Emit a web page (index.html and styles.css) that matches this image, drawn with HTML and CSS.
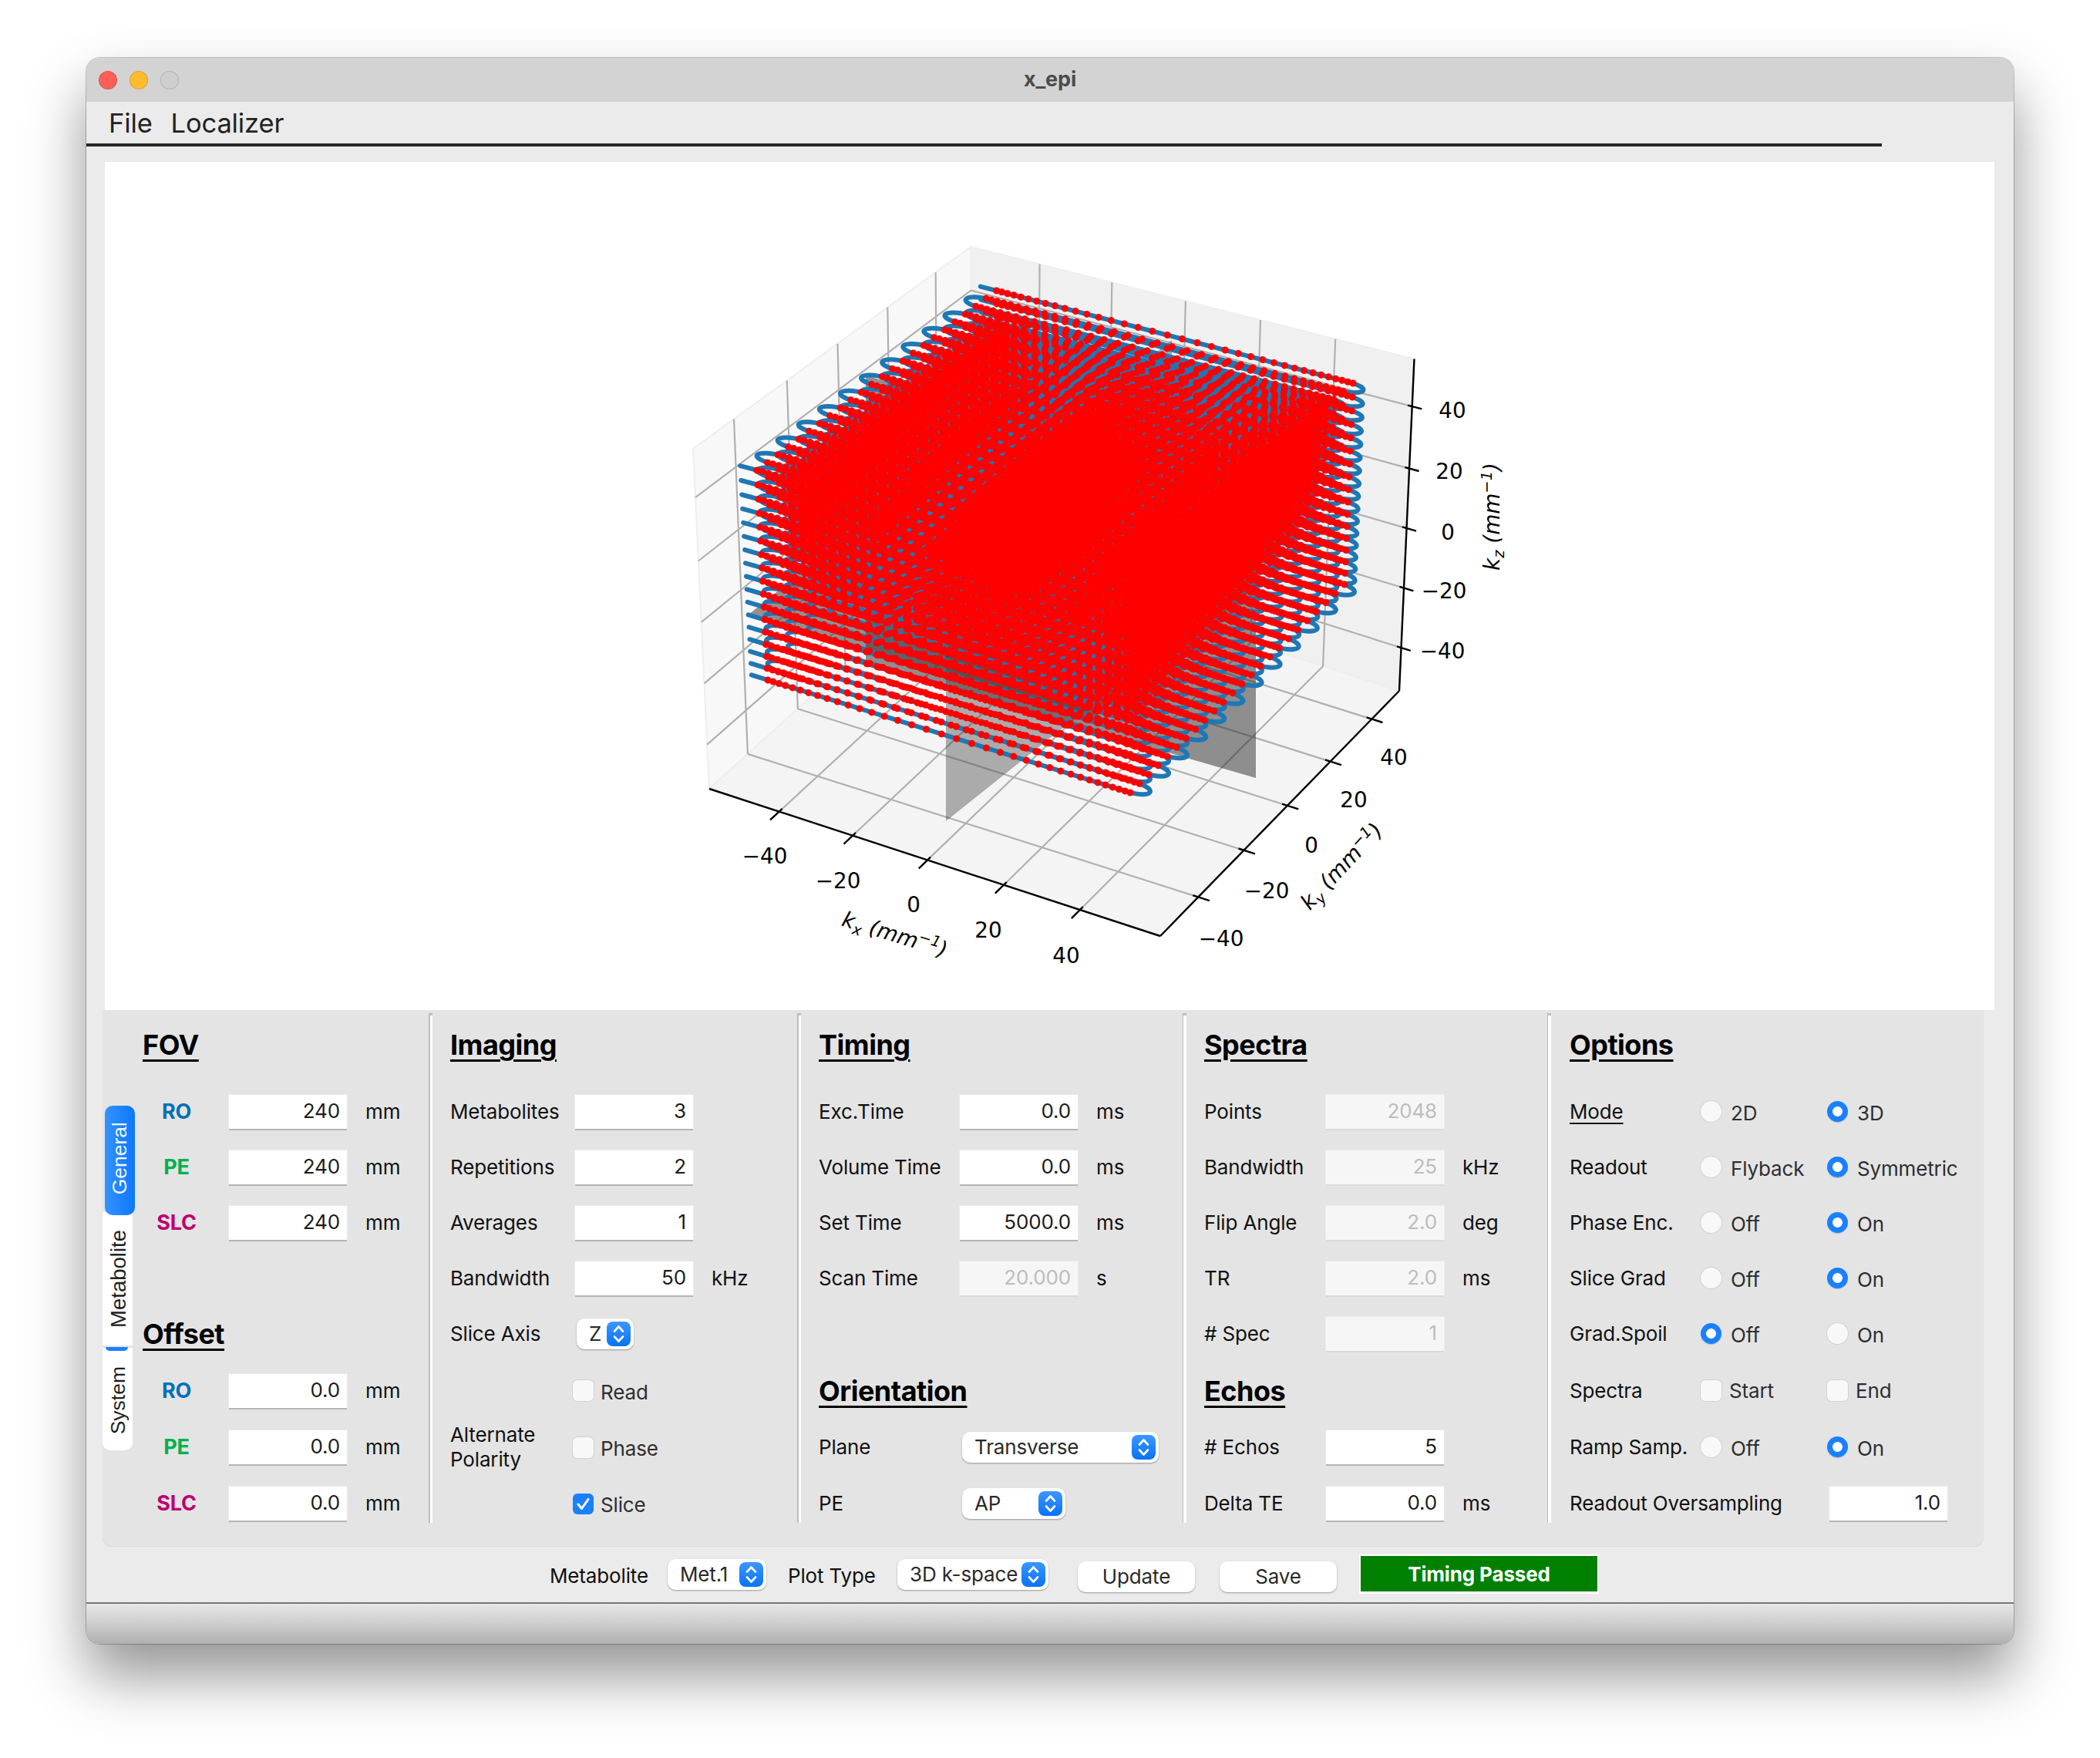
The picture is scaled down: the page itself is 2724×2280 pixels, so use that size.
FILE: index.html
```html
<!DOCTYPE html>
<html lang="en">
<head>
<meta charset="utf-8">
<title>x_epi</title>
<link rel="stylesheet" href="styles.css">
</head>
<body>
<svg class="defs" width="0" height="0" aria-hidden="true">
  <symbol id="chev" viewBox="0 0 31 32"><path d="M10 12.500l5.500-6 5.500 6M10 19.500l5.500 6 5.500-6" fill="none" stroke="#fff" stroke-width="2.600" stroke-linecap="round" stroke-linejoin="round"/></symbol>
</svg>
<main class="window">
  <header class="titlebar">
    <span class="light red"></span><span class="light yellow"></span><span class="light grey"></span>
    <span class="title">x_epi</span>
  </header>
  <nav class="menu"><span>File</span><span>Localizer</span></nav>

  <section class="plot">
    <svg id="plot" class="plot-svg" viewBox="136 210 2451 1100">
      <g id="scene"></g>
      <g class="ticklabels">
        <text x="992" y="1120">−40</text><text x="1087" y="1152">−20</text><text x="1185" y="1183">0</text><text x="1282" y="1216">20</text><text x="1383" y="1249">40</text>
        <text x="1584" y="1227">−40</text><text x="1643" y="1165">−20</text><text x="1701" y="1106">0</text><text x="1756" y="1047">20</text><text x="1808" y="992">40</text>
        <text x="1884" y="542">40</text><text x="1880" y="621">20</text><text x="1878" y="700">0</text><text x="1873" y="776">−20</text><text x="1871" y="854">−40</text>
      </g>
      <text class="axlabel" transform="translate(1158 1221) rotate(17)">k<tspan class="sub" dy="6">x</tspan><tspan dy="-6"> (mm</tspan><tspan class="sup" dy="-10">−1</tspan><tspan dy="10">)</tspan></text>
      <text class="axlabel" transform="translate(1747 1130) rotate(-47)">k<tspan class="sub" dy="6">y</tspan><tspan dy="-6"> (mm</tspan><tspan class="sup" dy="-10">−1</tspan><tspan dy="10">)</tspan></text>
      <text class="axlabel" transform="translate(1945 670) rotate(-90)">k<tspan class="sub" dy="6">z</tspan><tspan dy="-6"> (mm</tspan><tspan class="sup" dy="-10">−1</tspan><tspan dy="10">)</tspan></text>
    </svg>
  </section>

  <section class="panel">
    <div class="tabs">
      <div class="tab active"><span>General</span></div>
      <div class="tab"><span>Metabolite</span></div>
      <div class="tab last"><span>System</span></div>
    </div>

    <div class="col col-fov">
      <h2 class="full">FOV</h2>
      <b class="axis ro">RO</b><div class="entry">240</div><span>mm</span>
      <b class="axis pe">PE</b><div class="entry">240</div><span>mm</span>
      <b class="axis slc">SLC</b><div class="entry">240</div><span>mm</span>
      <div class="full"></div>
      <h2 class="full">Offset</h2>
      <b class="axis ro">RO</b><div class="entry">0.0</div><span>mm</span>
      <b class="axis pe">PE</b><div class="entry">0.0</div><span>mm</span>
      <b class="axis slc">SLC</b><div class="entry">0.0</div><span>mm</span>
    </div>

    <div class="col col-imaging">
      <h2 class="full">Imaging</h2>
      <span>Metabolites</span><div class="entry">3</div><span></span>
      <span>Repetitions</span><div class="entry">2</div><span></span>
      <span>Averages</span><div class="entry">1</div><span></span>
      <span>Bandwidth</span><div class="entry">50</div><span>kHz</span>
      <span>Slice Axis</span><div class="select sel-z">Z<i class="cap"><svg><use href="#chev"/></svg></i></div><span></span>
      <span></span><label class="opt full-rest"><i class="check"></i>Read</label>
      <span class="wrap">Alternate<br>Polarity</span><label class="opt full-rest"><i class="check"></i>Phase</label>
      <span></span><label class="opt full-rest"><i class="check on"><svg viewBox="0 0 27 27"><path d="M7 14l4.500 5.500L20 7.500" fill="none" stroke="#fff" stroke-width="3" stroke-linecap="round" stroke-linejoin="round"/></svg></i>Slice</label>
    </div>

    <div class="col col-timing">
      <h2 class="full">Timing</h2>
      <span>Exc.Time</span><div class="entry">0.0</div><span>ms</span>
      <span>Volume Time</span><div class="entry">0.0</div><span>ms</span>
      <span>Set Time</span><div class="entry">5000.0</div><span>ms</span>
      <span>Scan Time</span><div class="entry off">20.000</div><span>s</span>
      <div class="full"></div>
      <h2 class="full">Orientation</h2>
      <span>Plane</span><div class="select sel-plane full-rest">Transverse<i class="cap"><svg><use href="#chev"/></svg></i></div>
      <span>PE</span><div class="select sel-pe full-rest">AP<i class="cap"><svg><use href="#chev"/></svg></i></div>
    </div>

    <div class="col col-spectra">
      <h2 class="full">Spectra</h2>
      <span>Points</span><div class="entry off">2048</div><span></span>
      <span>Bandwidth</span><div class="entry off">25</div><span>kHz</span>
      <span>Flip Angle</span><div class="entry off">2.0</div><span>deg</span>
      <span>TR</span><div class="entry off">2.0</div><span>ms</span>
      <span># Spec</span><div class="entry off">1</div><span></span>
      <h2 class="full">Echos</h2>
      <span># Echos</span><div class="entry">5</div><span></span>
      <span>Delta TE</span><div class="entry">0.0</div><span>ms</span>
    </div>

    <div class="col col-options">
      <h2 class="full">Options</h2>
      <span class="under">Mode</span><label class="opt"><i class="radio"></i>2D</label><label class="opt"><i class="radio on"></i>3D</label>
      <span>Readout</span><label class="opt"><i class="radio"></i>Flyback</label><label class="opt"><i class="radio on"></i>Symmetric</label>
      <span>Phase Enc.</span><label class="opt"><i class="radio"></i>Off</label><label class="opt"><i class="radio on"></i>On</label>
      <span>Slice Grad</span><label class="opt"><i class="radio"></i>Off</label><label class="opt"><i class="radio on"></i>On</label>
      <span>Grad.Spoil</span><label class="opt"><i class="radio on"></i>Off</label><label class="opt"><i class="radio"></i>On</label>
      <span>Spectra</span><label class="opt box"><i class="check"></i>Start</label><label class="opt box"><i class="check"></i>End</label>
      <span>Ramp Samp.</span><label class="opt"><i class="radio"></i>Off</label><label class="opt"><i class="radio on"></i>On</label>
      <span class="wide">Readout Oversampling</span><div class="entry oversamp">1.0</div>
    </div>
  </section>

  <footer class="actions">
    <span class="act-label met">Metabolite</span>
    <div class="select sel-met">Met.1<i class="cap"><svg><use href="#chev"/></svg></i></div>
    <span class="act-label ptype">Plot Type</span>
    <div class="select sel-type">3D k-space<i class="cap"><svg><use href="#chev"/></svg></i></div>
    <div class="button update">Update</div>
    <div class="button save">Save</div>
    <div class="status">Timing Passed</div>
  </footer>
  <div class="statusbar"></div>
</main>
<script src="plot.js"></script>
</body>
</html>
```
FILE: styles.css
```css
* { box-sizing: border-box; }
html, body { margin: 0; background: #fff; }
body {
  width: 2724px;
  height: 2280px;
  overflow: hidden;
  font-family: Inter, "Liberation Sans", sans-serif;
  font-size: 26px;
  letter-spacing: -0.15px;
  white-space: nowrap;
  color: #111;
}
.defs { position: absolute; }

.window {
  margin: 75px 0 0 112px;
  width: 2500px;
  height: 2057px;
  border-radius: 18px;
  background: #ebebeb;
  overflow: hidden;
  box-shadow: 0 0 0 1px rgba(0,0,0,.22), 0 42px 76px rgba(0,0,0,.42);
}
.titlebar {
  position: relative;
  height: 57px;
  background: #d3d3d3;
  display: flex;
  align-items: center;
  gap: 16px;
  padding-left: 16px;
}
.light { width: 24px; height: 24px; border-radius: 50%; border: 1px solid rgba(0,0,0,.13); }
.red { background: #ff5f57; }
.yellow { background: #febc2e; }
.grey { background: #cfcfcf; }
.title {
  position: absolute;
  left: 0; right: 0; top: 13px;
  text-align: center;
  font-weight: 700;
  font-size: 27px;
  line-height: 30px;
  color: #4c4c4c;
}
.menu {
  width: 2329px;
  height: 58px;
  border-bottom: 4px solid #262626;
  display: flex;
  align-items: center;
  gap: 24px;
  padding-left: 29px;
  font-size: 34.500px;
  color: #222;
}
.plot {
  margin: 20px 0 0 24px;
  width: 2451px;
  height: 1100px;
  background: #fff;
}
.plot-svg { display: block; width: 100%; height: 100%; }

.pane-l { fill: #f8f8f8; stroke: #eee; stroke-width: 2; }
.pane-r { fill: #f0f0f0; stroke: #eee; stroke-width: 2; }
.pane-f { fill: #f4f4f4; stroke: #eee; stroke-width: 2; }
.grid { fill: none; stroke: #b0b0b0; stroke-width: 2.200; }
.axline { fill: none; stroke: #000; stroke-width: 2.400; }
.plane-a { fill: rgba(70,70,70,.42); }
.plane-b { fill: rgba(40,40,40,.5); }
.plane-z { fill: rgba(60,60,60,.55); }
.traj { fill: none; stroke: #1f77b4; stroke-width: 6; stroke-linejoin: round; stroke-linecap: round; }
.dots { fill: none; stroke: #f00; stroke-width: 9; stroke-linecap: round; }
.ticklabels text { font: 27.800px "DejaVu Sans", sans-serif; letter-spacing: 0; text-anchor: middle; fill: #000; }
.axlabel { font: italic 27.800px "DejaVu Sans", sans-serif; letter-spacing: 0; text-anchor: middle; fill: #000; }
.sub, .sup { font-size: 19.500px; }

.panel {
  position: relative;
  margin-left: 21px;
  width: 2440px;
  height: 695px;
  padding-top: 4px;
  background: #e4e4e4;
  border-radius: 0 0 12px 12px;
  box-shadow: 0 1px 1px #d6d6d6;
  display: flex;
}
.col {
  position: relative;
  flex: none;
  height: 661px;
  display: grid;
  grid-template-rows: 92px repeat(5, 72px) 75px 72px 74px;
  align-items: center;
  line-height: 32px;
}
.col:not(.col-fov)::before {
  content: "";
  position: absolute;
  left: -3px; top: 0; bottom: 0;
  width: 5px;
  background:
    linear-gradient(#bdbdbd 3px, transparent 3px),
    linear-gradient(90deg, #bdbdbd 1.500px, #fff 1.500px);
}
.col-fov { width: 426px; padding-left: 52px; grid-template-columns: 88px 153px auto; column-gap: 24px; justify-items: start; }
.col-imaging { width: 478px; padding-left: 25px; grid-template-columns: 138px 153px auto; column-gap: 24px; }
.col-timing { width: 500px; padding-left: 25px; grid-template-columns: 159px 153px auto; column-gap: 24px; }
.col-spectra { width: 473px; padding-left: 25px; grid-template-columns: 134px 153px auto; column-gap: 24px; }
.col-options { width: 563px; padding-left: 26px; grid-template-columns: 170px 164px auto; }
.full { grid-column: 1 / -1; }
.full-rest { grid-column: 2 / -1; }
.wide { grid-column: 1 / 3; }

h2 {
  margin: 0;
  font-size: 36px;
  line-height: 44px;
  font-weight: 700;
  letter-spacing: -0.5px;
  color: #000;
  text-decoration: underline;
  text-decoration-thickness: 3px;
  text-underline-offset: 6px;
}
.col > h2:first-child { align-self: start; margin-top: 19px; }
.under { text-decoration: underline; text-underline-offset: 5px; text-decoration-thickness: 2px; justify-self: start; }

.axis { justify-self: center; font-size: 27px; font-weight: 700; }
.ro { color: #0070b8; }
.pe { color: #00b04f; }
.slc { color: #bc0070; }

.entry {
  width: 153px;
  height: 44px;
  padding-right: 9px;
  background: #fff;
  color: #1c1c1c;
  text-align: right;
  line-height: 42px;
  box-shadow: 0 2px 0 #b4b4b4, 0 0 0 1px #eaeaea;
}
.entry.off { background: #f6f6f6; color: #bdbdbd; box-shadow: 0 2px 0 #dadada, 0 0 0 1px #ececec; }
.oversamp { margin-left: 3px; }

.select {
  height: 40px;
  padding-left: 16px;
  padding-right: 4px;
  display: flex;
  align-items: center;
  justify-content: space-between;
  background: #fff;
  border-radius: 10px;
  color: #2a2a2a;
  box-shadow: 0 1px 2px rgba(0,0,0,.35);
}
.cap {
  flex: none;
  width: 31px;
  height: 32px;
  border-radius: 8px;
  background: linear-gradient(#3b97ff, #0a72f5);
}
.cap svg { display: block; width: 31px; height: 32px; }
.sel-z { width: 74px; margin-left: 2px; }
.sel-plane { width: 255px; margin-left: 3px; }
.sel-pe { width: 134px; margin-left: 3px; }
.sel-met { width: 128px; }
.sel-type { width: 196px; }

.opt { display: flex; align-items: center; margin-top: 4px; color: #2e2e2e; }
.opt > i { flex: none; margin-right: 12px; }
.check {
  width: 27px; height: 27px;
  margin-left: -3px;
  border-radius: 6px;
  background: #f8f8f8;
  box-shadow: 0 0 0 1px #d2d2d2;
}
.opt > .check { margin-right: 9px; margin-top: -4px; }
.check.on { background: #1a80ff; box-shadow: none; }
.check svg { display: block; }
.col-options .opt > .check { margin-left: 0; margin-right: 10px; }
.col-options .opt.box { margin-top: 0; }
.col-options .opt.box > .check { margin-top: 0; }
.radio {
  width: 27px; height: 27px;
  margin-top: -5px;
  border-radius: 50%;
  background: #f8f8f8;
  box-shadow: 0 0 0 1px #d2d2d2;
}
.radio.on {
  background: radial-gradient(circle, #fff 0 6px, #1a80ff 6.800px);
  box-shadow: 0 1px 1px rgba(0,0,0,.18);
}

.tabs {
  position: absolute;
  left: 0; top: 124px;
  width: 42px;
  display: flex;
  flex-direction: column;
  font-family: "Liberation Sans", Arial, sans-serif;
  font-size: 26.500px;
  letter-spacing: 0;
}
.tab {
  position: relative;
  width: 39px;
  height: 169px;
  margin-top: -4px;
  padding-left: 2px;
  background: #fff;
  display: flex;
  align-items: center;
  justify-content: center;
  color: #222;
}
.tab span { writing-mode: vertical-rl; transform: rotate(180deg); line-height: 1; }
.tab.active {
  z-index: 1;
  width: 39px;
  height: 142px;
  margin: 0 0 0 3px;
  padding-left: 0;
  padding-bottom: 6px;
  border-radius: 10px;
  background: linear-gradient(90deg, #3492ff, #0d78fa);
  color: #eef6ff;
}
.tab:nth-child(2) { height: 173px; font-size: 27.500px; }
.tab.last {
  height: 133px;
  margin-top: 3px;
  padding-top: 3px;
  border-radius: 0 0 10px 10px;
}
.tab.last::before {
  content: "";
  position: absolute;
  left: 4px; top: -1px;
  width: 29px; height: 5px;
  border-radius: 0 0 5px 5px;
  background: #1a80ff;
}

.actions {
  height: 75px;
  padding-left: 601px;
  display: flex;
  align-items: center;
  border-bottom: 2px solid #777;
  color: #111;
}
.act-label.met { width: 125px; margin-right: 28px; }
.act-label.ptype { width: 114px; margin: 0 28px; }
.act-label { padding-top: 3px; }
.button {
  width: 152px;
  height: 40px;
  margin-top: 6px;
  background: #fff;
  border-radius: 10px;
  text-align: center;
  line-height: 40px;
  color: #2a2a2a;
  box-shadow: 0 1px 2px rgba(0,0,0,.35);
}
.update { margin-left: 38px; }
.save { margin-left: 32px; }
.status {
  width: 311px;
  height: 51px;
  margin-left: 29px;
  border: 3px solid #fff;
  border-width: 2px 2px 3px 2px;
  background: #008000;
  color: #fff;
  font-weight: 700;
  text-align: center;
  line-height: 48px;
}
.statusbar {
  height: 53px;
  background: linear-gradient(#e6e6e6, #d0d0d0 45%, #b0b0b0);
  border-bottom: 1px solid #8e8e8e;
}
```
FILE: plot.js
```js
(function () {
  var NS = 'http://www.w3.org/2000/svg';
  var scene = document.getElementById('scene');

  function add(cls, d) {
    var p = document.createElementNS(NS, 'path');
    p.setAttribute('class', cls);
    p.setAttribute('d', d);
    scene.appendChild(p);
  }
  function lerp(a, b, t) { return [a[0] + (b[0] - a[0]) * t, a[1] + (b[1] - a[1]) * t]; }
  function seg(a, b) { return 'M' + a[0].toFixed(1) + ' ' + a[1].toFixed(1) + 'L' + b[0].toFixed(1) + ' ' + b[1].toFixed(1); }

  // Axes box corners in screen pixels
  var L = [920, 1023], F = [1505, 1214], R = [1815, 896], B = [1259.5, 716];
  var LT = [899, 582], BT = [1259.5, 320], RT = [1834.5, 465.5];

  add('pane-l', 'M' + [L, LT, BT, B].join('L') + 'Z');
  add('pane-r', 'M' + [B, BT, RT, R].join('L') + 'Z');
  add('pane-f', 'M' + [L, B, R, F].join('L') + 'Z');

  var xt = [.155, .318, .484, .653, .822];
  var yt = [.147, .338, .52, .70, .873];
  var zt = [.13, .31, .49, .67, .857];
  var g = '', ax = '';
  xt.forEach(function (t) {
    var a = lerp(L, F, t), b = lerp(B, R, t), c = lerp(BT, RT, t);
    g += seg(a, b) + seg(b, c);
    ax += seg(lerp(a, b, -0.035), lerp(a, b, 0.012));
  });
  yt.forEach(function (t) {
    var a = lerp(F, R, t + .012), b = lerp(L, B, t), c = lerp(LT, BT, t);
    g += seg(a, b) + seg(b, c);
    ax += seg(lerp(a, b, -0.025), lerp(a, b, 0.012));
  });
  zt.forEach(function (t) {
    var a = lerp(L, LT, t), b = lerp(B, BT, t), c = lerp(R, RT, t);
    g += seg(a, b) + seg(b, c);
    ax += seg(lerp(b, c, 1.022), lerp(b, c, 0.99));
  });
  add('grid', g);
  ax += seg(L, F) + seg(F, R) + seg(R, RT);
  add('axline', ax);

  // Localizer planes, seen through the trajectory
  add('plane-b', 'M1629 1009L1629 634L1123 487L1123 862Z');
  add('plane-a', 'M1227 1065L1520 831L1520 441L1227 675Z');
  add('plane-z', 'M971 797L1420 930L1630 760L1180 630Z');

  // k-space block corners: c[x][y][z], index 0 = minus, 1 = plus
  var c = [
    [[[996, 882], [982, 610]], [[1297, 622], [1292.7, 377]]],
    [[[1466, 1028], [1467, 738]], [[1744, 758], [1755, 497]]]
  ];
  function map(u, v, w) {
    var a = (u + 1) / 2, b = (v + 1) / 2, d = (w + 1) / 2, out = [0, 0];
    for (var i = 0; i < 2; i++) for (var j = 0; j < 2; j++) for (var k = 0; k < 2; k++) {
      var f = (i ? a : 1 - a) * (j ? b : 1 - b) * (k ? d : 1 - d);
      out[0] += f * c[i][j][k][0];
      out[1] += f * c[i][j][k][1];
    }
    return out;
  }
  function pt(p) { return p[0].toFixed(1) + ' ' + p[1].toFixed(1); }

  var NY = 24, NZ = 17, NX = 36, RAMP = 16;
  var xs = [], sum = 0, i;
  for (i = 0; i < NX; i++) {
    sum += i ? Math.min(1, (20 + 38 * Math.min(i - 1, NX - 1 - i) / RAMP) / 58) : 0;
    xs.push(sum);
  }
  xs = xs.map(function (s) { return s / sum * 2 - 1; });

  // Slices sit closer together further from the camera (perspective)
  var zs = [0], zsum = 0;
  for (i = 1; i < NZ; i++) {
    zsum += 15.2 + 3.6 * (i - 1) / (NZ - 2);
    zs.push(zsum);
  }
  zs = zs.map(function (s) { return s / zsum * 2 - 1; });

  var blue = '', red = '';
  for (var k = 0; k < NZ; k++) {
    var w = zs[k];
    for (var j = 0; j < NY; j++) {
      var v = j / (NY - 1) * 2 - 1;
      var v2 = (j + 1) / (NY - 1) * 2 - 1;
      if (j === 0 || j === NY - 1) {
        blue += 'M' + pt(map(-1.09, v, w)) + 'L' + pt(map(.98, v, w));
      } else {
        blue += 'M' + pt(map(-.98, v, w)) + 'L' + pt(map(.98, v, w));
      }
      if (j % 2 === 0 && j < NY - 1) {
        blue += 'M' + pt(map(.98, v, w)) + 'C' + pt(map(1.115, v, w)) + ' ' + pt(map(1.115, v2, w)) + ' ' + pt(map(.98, v2, w));
      }
      if (j % 2 === 1 && j < NY - 1) {
        blue += 'M' + pt(map(-.98, v, w)) + 'C' + pt(map(-1.115, v, w)) + ' ' + pt(map(-1.115, v2, w)) + ' ' + pt(map(-.98, v2, w));
      }
      xs.forEach(function (u) { red += 'M' + pt(map(u, v, w)) + 'h.01'; });
    }
  }
  add('traj', blue);
  add('dots', red);
})();
```
